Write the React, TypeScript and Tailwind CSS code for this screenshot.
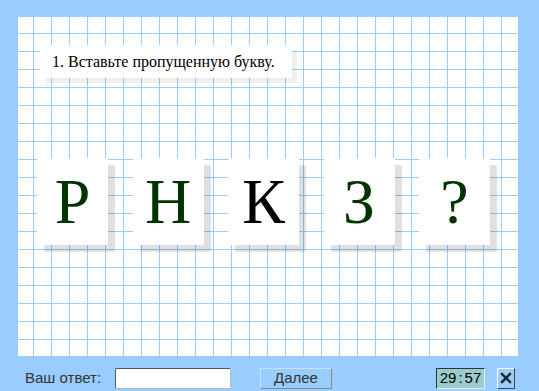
const letters = [
  { ch: "Р", color: "text-[#003300]" },
  { ch: "Н", color: "text-[#003300]" },
  { ch: "К", color: "text-black" },
  { ch: "З", color: "text-[#003300]" },
  { ch: "?", color: "text-[#003300]" },
];

function LetterCard({ ch, color }: { ch: string; color: string }) {
  return (
    <div className="flex h-[87px] w-[71px] shrink-0 items-center justify-center rounded-[2px] bg-white shadow-[7px_7px_1px_rgba(0,0,0,0.12)]">
      <span className={`font-[family-name:Liberation_Serif,serif] text-[64px] leading-none ${color}`}>{ch}</span>
    </div>
  );
}

export default function App() {
  return (
    <div className="flex h-[391px] w-[539px] flex-col bg-[#99ccff] pl-[18px] pt-[17px] font-[family-name:Liberation_Sans,Arial,sans-serif]">
      <div className="flex h-[339px] w-[500px] flex-col bg-white bg-[linear-gradient(to_right,#99ccff_1px,transparent_1px),linear-gradient(to_bottom,#99ccff_1px,transparent_1px)] bg-[size:18px_18px] bg-[position:15px_16px]">
        <div className="ml-[22px] mt-[28px] flex h-[33px] w-[252px] items-center rounded-[2px] bg-white pl-[12px] shadow-[5px_5px_1px_rgba(0,0,0,0.06)]">
          <span className="font-[family-name:Liberation_Serif,serif] text-[16px] text-black">1. Вставьте пропущенную букву.</span>
        </div>
        <div className="ml-[19px] mt-[80px] flex gap-[24.5px]">
          {letters.map((l) => (
            <LetterCard key={l.ch} ch={l.ch} color={l.color} />
          ))}
        </div>
      </div>
      <div className="flex items-center pt-[11px] text-[15px] text-[#333]">
        <span className="ml-[7px] w-[90px]">Ваш ответ:</span>
        <input
          type="text"
          className="h-[21px] w-[116px] rounded-[2px] border border-b-[#bbb] border-l-[#555] border-r-[#bbb] border-t-[#555] bg-white outline-none"
        />
        <button
          type="button"
          className="ml-[29px] flex h-[21px] w-[72px] items-center justify-center border border-b-[#888] border-l-[#c8e2ff] border-r-[#888] border-t-[#c8e2ff] bg-[#99ccff] text-[15px] text-[#333]"
        >
          Далее
        </button>
        <div className="ml-[104px] flex h-[21px] w-[49px] items-center justify-center border border-b-[#e6f3f3] border-l-[#333] border-r-[#e6f3f3] border-t-[#333] bg-[#99cccc] text-[15px] text-black">
          <span>29</span>
          <span className="mx-[2px]">:</span>
          <span>57</span>
        </div>
        <button
          type="button"
          className="ml-[12px] flex h-[21px] w-[18px] items-center justify-center border border-b-[#444] border-l-white border-r-[#444] border-t-white bg-[#99ccff]"
        >
          <svg width="12" height="12" viewBox="0 0 12 12">
            <path d="M2 2 L10 10 M10 2 L2 10" stroke="#222" strokeWidth="2.4" strokeLinecap="square" />
          </svg>
        </button>
      </div>
    </div>
  );
}
